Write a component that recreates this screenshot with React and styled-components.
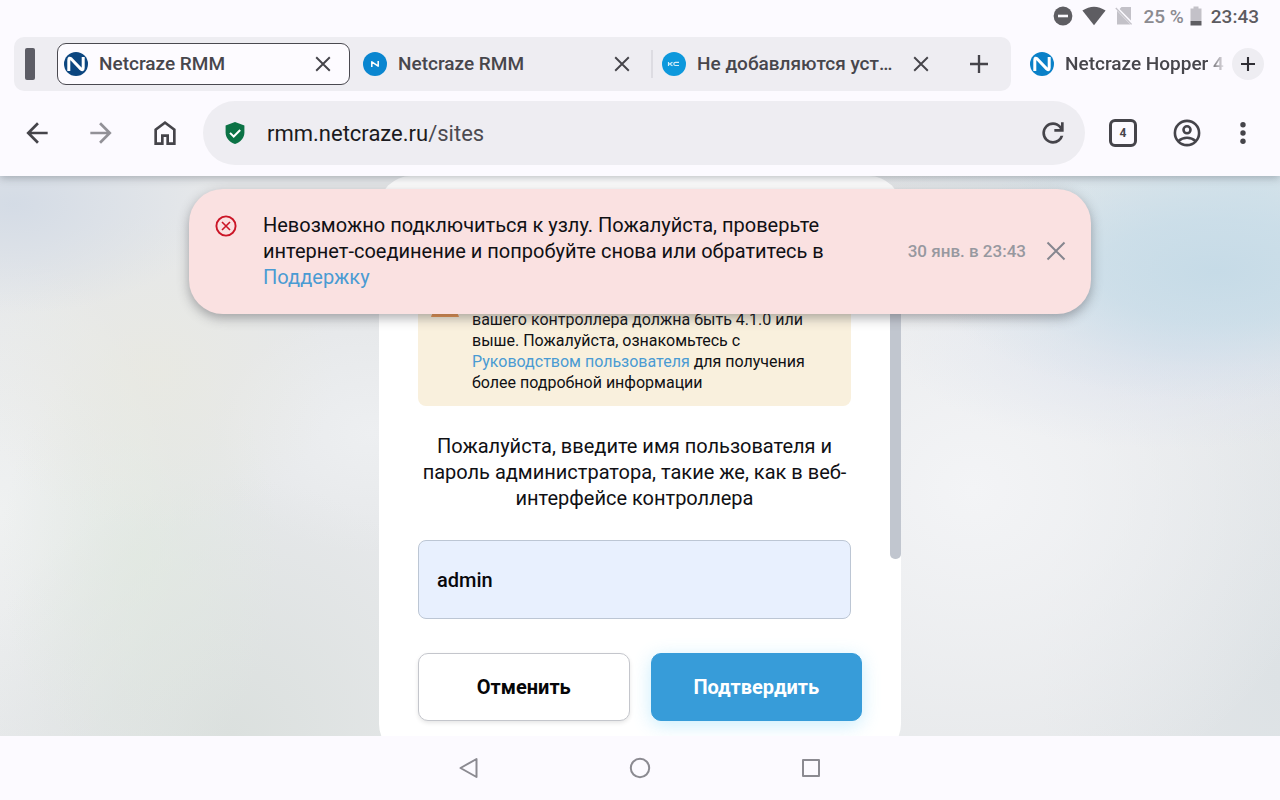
import React, { useState } from 'react';
import styled, { createGlobalStyle, css } from 'styled-components';

const GlobalStyle = createGlobalStyle`
  *, *::before, *::after { box-sizing: border-box; }
  html, body { margin: 0; padding: 0; }
  body { background: #fcfaff; font-family: Roboto, "Noto Sans", sans-serif; color: #101014; }
  button { font-family: inherit; cursor: pointer; }
  svg { display: block; flex: none; }
  a { color: #4a9bd3; text-decoration: none; }
`;

const Screen = styled.div`
  display: flex;
  flex-direction: column;
  min-height: 100vh;
`;

/* ---------- system status bar ---------- */
const StatusBar = styled.header`
  display: flex;
  justify-content: flex-end;
  align-items: center;
  height: 32px;
  padding-right: 21px;
  font-size: 19px;
  font-weight: 500;
  color: #5c5b60;
`;
const StatusIcons = styled.div`
  display: flex;
  align-items: center;
  gap: 9px;
  margin-right: 10px;
`;
const Battery = styled.div`
  display: flex;
  align-items: center;
  gap: 6px;
  margin-right: 9px;
  color: #8b8a90;
`;

/* ---------- browser tab strip ---------- */
const TabStrip = styled.div`
  display: flex;
  align-items: center;
  height: 64px;
  padding: 0 16px 0 14px;
`;
const TabGroup = styled.div`
  display: flex;
  flex: 1;
  min-width: 0;
  align-items: center;
  height: 54px;
  padding: 0 16px 0 11px;
  border-radius: 10px;
  background: #eeedf2;
`;
const GroupMarker = styled.span`
  flex: none;
  width: 10px;
  height: 32px;
  margin-right: 22px;
  border-radius: 2px;
  background: #5d5d66;
`;
const Tabs = styled.div`
  display: flex;
  flex: 1;
  min-width: 0;
  align-items: center;
`;
const TabDivider = styled.span`
  flex: none;
  width: 2px;
  height: 28px;
  margin: 0 2px;
  background: ${(p) => (p.$visible ? '#dddce2' : 'transparent')};
`;
const Tab = styled.div`
  display: flex;
  flex: 1;
  min-width: 0;
  align-items: center;
  gap: 11px;
  height: 42px;
  padding: 0 14px 0 6px;
  border: 1px solid transparent;
  border-radius: 9px;
  ${(p) =>
    p.$active &&
    css`
      border-color: #4a4950;
      background: #fdfbff;
    `}
`;
const TabTitle = styled.span`
  flex: 1;
  min-width: 0;
  overflow: hidden;
  white-space: nowrap;
  font-size: 19px;
  line-height: 24px;
  font-weight: 500;
  color: #47464c;
  ${(p) =>
    p.$fade &&
    css`
      mask-image: linear-gradient(to right, #000 calc(100% - 18px), transparent);
    `}
`;
const IconButton = styled.button`
  display: flex;
  flex: none;
  align-items: center;
  justify-content: center;
  width: ${(p) => p.$size}px;
  height: ${(p) => p.$size}px;
  padding: 0;
  border: 0;
  border-radius: 50%;
  background: ${(p) => p.$fill || 'transparent'};
  color: ${(p) => p.$tone || '#45444a'};
`;
const NewTabSlot = styled.div`
  margin-left: 15px;
`;
const LooseTab = styled.div`
  display: flex;
  flex: none;
  align-items: center;
  gap: 11px;
  width: 202px;
  margin-left: 19px;
  padding-right: 6px;
`;

/* ---------- browser toolbar ---------- */
const Toolbar = styled.div`
  position: relative;
  z-index: 2;
  display: flex;
  align-items: center;
  height: 80px;
  padding: 0 21px 6px 21px;
  background: #fcfaff;
  box-shadow: 0 2px 8px rgba(60, 70, 80, 0.35);
  clip-path: inset(0 0 -16px 0);
`;
const NavButtons = styled.nav`
  display: flex;
  gap: 32px;
  margin-right: 22px;
`;
const AddressBar = styled.div`
  display: flex;
  flex: 1;
  min-width: 0;
  align-items: center;
  height: 64px;
  padding: 0 16px 0 20px;
  border-radius: 32px;
  background: #eeedf2;
`;
const Url = styled.a`
  flex: 1;
  min-width: 0;
  margin-left: 20px;
  padding-top: 2px;
  overflow: hidden;
  white-space: nowrap;
  font-size: 22px;
  line-height: 30px;
  color: #1b1b20;
  span { color: #4b4a50; }
`;
const ToolbarActions = styled.div`
  display: flex;
  gap: 32px;
  margin-left: 22px;
`;
const MenuSlot = styled.div`
  margin-left: 24px;
`;
const TabCount = styled.span`
  display: flex;
  align-items: center;
  justify-content: center;
  width: 28px;
  height: 28px;
  border: 3px solid #45444a;
  border-radius: 6px;
  font-size: 12px;
  font-weight: 700;
`;

/* ---------- web page ---------- */
const Page = styled.main`
  position: relative;
  display: flex;
  flex: 1;
  justify-content: center;
  overflow: hidden;
  background:
    radial-gradient(ellipse 290px 130px at 95% 17%, rgba(198, 219, 231, 1), rgba(199, 220, 232, 0.75) 40%, rgba(205, 222, 232, 0.25) 75%, rgba(210, 222, 234, 0) 100%),
    radial-gradient(ellipse 380px 150px at 98% 3%, rgba(210, 226, 234, 0.9), rgba(210, 226, 234, 0) 100%),
    radial-gradient(ellipse 280px 100px at 92% 31%, rgba(220, 226, 238, 0.8), rgba(220, 226, 238, 0) 100%),
    radial-gradient(ellipse 360px 330px at 76% 56%, rgba(243, 244, 246, 1), rgba(243, 244, 246, 0) 100%),
    radial-gradient(ellipse 240px 420px at 100% 90%, rgba(221, 226, 229, 1), rgba(221, 226, 229, 0) 100%),
    radial-gradient(ellipse 200px 110px at 1% 5%, rgba(210, 218, 229, 0.9), rgba(210, 218, 229, 0) 100%),
    radial-gradient(ellipse 180px 160px at 12% 35%, rgba(233, 233, 225, 0.8), rgba(233, 233, 225, 0) 100%),
    radial-gradient(ellipse 140px 220px at 11% 68%, rgba(225, 233, 224, 0.7), rgba(225, 233, 224, 0) 100%),
    radial-gradient(ellipse 260px 260px at 18% 100%, rgba(219, 224, 222, 1), rgba(219, 224, 222, 0) 100%),
    radial-gradient(ellipse 180px 260px at 0% 60%, rgba(239, 241, 241, 1), rgba(239, 241, 241, 0) 100%),
    radial-gradient(ellipse 160px 120px at 29% 46%, rgba(237, 239, 241, 1), rgba(237, 239, 241, 0) 100%),
    #e6e8ea;
`;
const Dialog = styled.section`
  display: flex;
  flex-direction: column;
  width: 522px;
  max-width: 100%;
  margin-bottom: -20px;
  border-radius: 32px;
  background: #fff;
  overflow: hidden;
`;
const DialogScroll = styled.div`
  display: flex;
`;
const DialogBody = styled.div`
  flex: 1;
  min-width: 0;
  padding: 111px 39px 0;
`;
const ScrollThumb = styled.div`
  width: 11px;
  height: 343px;
  margin-top: 40px;
  border-radius: 5px;
  background: #c1c6cf;
`;
const Warning = styled.div`
  display: flex;
  align-items: flex-start;
  gap: 13px;
  padding: 2px 20px 13px 13px;
  border-radius: 8px;
  background: #f9f0dd;
`;
const WarningText = styled.p`
  flex: 1;
  margin: 0;
  padding-top: 20px;
  font-size: 16px;
  line-height: 21px;
`;
const Message = styled.p`
  margin: 27px 0 29px;
  font-size: 20px;
  line-height: 26px;
  text-align: center;
`;
const LoginInput = styled.input`
  display: block;
  width: 100%;
  height: 79px;
  padding: 0 18px;
  border: 1px solid #bcc6d4;
  border-radius: 8px;
  background: #e8f0fe;
  color: #08080c;
  font-family: inherit;
  font-size: 20px;
  font-weight: 500;
  outline: none;
`;
const DialogFooter = styled.div`
  display: flex;
  gap: 21px;
  padding: 34px 39px 35px;
`;
const ActionButton = styled.button`
  flex: 1;
  height: 68px;
  border: 1px solid ${(p) => (p.$primary ? '#379cd9' : '#c4c6cc')};
  border-radius: 10px;
  background: ${(p) => (p.$primary ? '#379cd9' : '#fff')};
  box-shadow: ${(p) =>
    p.$primary ? '0 4px 18px rgba(90, 200, 245, 0.32)' : '0 2px 4px rgba(0, 0, 0, 0.1)'};
  color: ${(p) => (p.$primary ? '#fff' : '#060608')};
  font-size: 20px;
  font-weight: 700;
`;

const ToastLayer = styled.div`
  position: absolute;
  top: 13px;
  left: 0;
  right: 0;
  display: flex;
  justify-content: center;
  padding: 0 16px;
`;
const Toast = styled.div`
  display: flex;
  align-items: center;
  width: 902px;
  padding: 23px 20px 24px 26px;
  border-radius: 34px;
  background: #fae1e1;
  box-shadow: 0 4px 12px rgba(60, 60, 66, 0.42);
`;
const ToastIcon = styled.span`
  align-self: flex-start;
  padding-top: 3px;
  margin-right: 26px;
`;
const ToastText = styled.p`
  flex: 1;
  margin: 0;
  padding-right: 64px;
  font-size: 20px;
  line-height: 26px;
`;
const ToastTime = styled.time`
  margin-right: 15px;
  white-space: nowrap;
  font-size: 17px;
  font-weight: 500;
  color: #97989f;
`;

/* ---------- system navigation ---------- */
const SystemNav = styled.footer`
  display: flex;
  justify-content: center;
  align-items: center;
  gap: 139px;
  height: 64px;
`;

const BrandIcon = ({ color }) => (
  <svg width="24" height="24" viewBox="0 0 24 24" aria-hidden="true">
    <circle cx="12" cy="12" r="12" fill={color} />
    <path
      d="M4.800 19V8.200Q4.800 4.800 7.300 7L16.700 16.800Q19.200 19 19.200 15.800V5"
      fill="none"
      stroke="#fff"
      strokeWidth="3"
    />
  </svg>
);
const BrandSmallIcon = () => (
  <svg width="24" height="24" viewBox="0 0 24 24" aria-hidden="true">
    <circle cx="12" cy="12" r="12" fill="#0a86d0" />
    <path d="M8.800 15V9.800L15.200 14.200V9" fill="none" stroke="#fff" strokeWidth="1.500" strokeLinejoin="round" />
  </svg>
);
const ForumIcon = () => (
  <svg width="24" height="24" viewBox="0 0 24 24" aria-hidden="true">
    <circle cx="12" cy="12" r="12" fill="#0d98dc" />
    <path
      d="M6.500 10v4M10.500 10.200L7.500 12l3 1.800M17 10.400h-3.500q-1.700 0-1.700 1.500t1.700 1.600H17"
      fill="none"
      stroke="#d3edf9"
      strokeWidth="1.200"
    />
  </svg>
);
const CrossIcon = ({ size, width }) => (
  <svg width={size} height={size} viewBox="0 0 20 20" fill="none" stroke="currentColor" strokeWidth={width} aria-hidden="true">
    <path d="M1.500 1.500l17 17M18.500 1.500l-17 17" />
  </svg>
);
const PlusIcon = ({ size, width }) => (
  <svg width={size} height={size} viewBox="0 0 20 20" fill="none" stroke="currentColor" strokeWidth={width} aria-hidden="true">
    <path d="M10 0v20M0 10h20" />
  </svg>
);
const BackIcon = () => (
  <svg width="32" height="32" viewBox="0 0 24 24" fill="currentColor" aria-hidden="true">
    <path d="m7.825 13 5.600 5.600L12 20l-8-8 8-8 1.425 1.400-5.600 5.600H20v2z" />
  </svg>
);
const ForwardIcon = () => (
  <svg width="32" height="32" viewBox="0 0 24 24" fill="currentColor" aria-hidden="true">
    <path d="M16.175 13H4v-2h12.175l-5.600-5.600L12 4l8 8-8 8-1.425-1.400z" />
  </svg>
);
const HomeIcon = () => (
  <svg width="32" height="32" viewBox="0 0 24 24" fill="currentColor" aria-hidden="true">
    <path d="M6 19h3v-6h6v6h3v-9l-6-4.500L6 10zm-2 2V9l8-6 8 6v12h-7v-6h-2v6z" />
  </svg>
);
const ShieldIcon = () => (
  <svg width="24" height="24" viewBox="0 0 24 24" aria-hidden="true">
    <path d="M12 .9l9.400 3.500v7.100c0 5.200-3.800 9.900-9.400 11.500-5.600-1.600-9.400-6.300-9.400-11.500V4.400z" fill="#0b7245" />
    <path d="M7 11.900l3.700 3.600 6.500-6.500" fill="none" stroke="#fff" strokeWidth="2" />
  </svg>
);
const ReloadIcon = () => (
  <svg width="32" height="32" viewBox="0 -960 960 960" fill="currentColor" aria-hidden="true">
    <path d="M480-160q-134 0-227-93t-93-227q0-134 93-227t227-93q69 0 132 28.500T720-690v-110h80v280H520v-80h168q-32-56-87.500-88T480-720q-100 0-170 70t-70 170q0 100 70 170t170 70q77 0 139-44t87-116h84q-28 106-114 173t-196 67Z" />
  </svg>
);
const AccountIcon = () => (
  <svg width="32" height="32" viewBox="0 0 32 32" fill="none" stroke="currentColor" strokeWidth="2.600" aria-hidden="true">
    <circle cx="16" cy="16" r="12.100" />
    <circle cx="16" cy="12.800" r="3.500" />
    <path d="M7.500 24q3.500-3.200 8.500-3.200t8.500 3.200" />
  </svg>
);
const MoreIcon = () => (
  <svg width="32" height="32" viewBox="0 0 32 32" fill="currentColor" aria-hidden="true">
    <circle cx="16" cy="7.800" r="2.700" />
    <circle cx="16" cy="16" r="2.700" />
    <circle cx="16" cy="24.200" r="2.700" />
  </svg>
);
const DoNotDisturbIcon = () => (
  <svg width="20" height="20" viewBox="0 0 20 20" aria-hidden="true">
    <circle cx="10" cy="10" r="9.400" fill="#5e5d62" />
    <path d="M5 10h10" stroke="#fcfaff" strokeWidth="2.600" />
  </svg>
);
const WifiIcon = () => (
  <svg width="24" height="20" viewBox="0 0 24 20" aria-hidden="true">
    <path d="M.4 4.600Q12-3.200 23.600 4.600L12 19.200z" fill="#5e5d62" />
  </svg>
);
const NoSimIcon = () => (
  <svg width="18" height="20" viewBox="0 0 18 20" aria-hidden="true">
    <path d="M6.500 1H16v13.600L4.600 3zM2 4.800L15.500 18.500H2z" fill="#c3c1c8" />
    <path d="M.8 2l15.800 16.400" stroke="#c3c1c8" strokeWidth="1.300" />
  </svg>
);
const BatteryIcon = () => (
  <svg width="12" height="20" viewBox="0 0 12 20" aria-hidden="true">
    <path d="M3.500 .5h5v2H11.500V15H.5V2.500h3z" fill="#c3c1c8" />
    <path d="M.5 15h11v4.500H.5z" fill="#5e5d62" />
  </svg>
);
const ErrorIcon = () => (
  <svg width="22" height="22" viewBox="0 0 22 22" fill="none" stroke="#cb1526" aria-hidden="true">
    <circle cx="11" cy="11" r="9.600" strokeWidth="1.900" />
    <path d="M7 7l8 8M15 7l-8 8" strokeWidth="1.600" />
  </svg>
);
const WarningIcon = () => (
  <svg width="28" height="28" viewBox="0 0 28 28" aria-hidden="true">
    <path d="M14 2L27.500 27.500H.5z" fill="#e9924d" stroke="#e9924d" strokeLinejoin="round" />
    <path d="M14 10v9M14 21.500v2.500" stroke="#fff" strokeWidth="2.400" />
  </svg>
);
const NavShape = ({ children }) => (
  <svg width="32" height="32" viewBox="0 0 32 32" fill="none" stroke="#8b8a91" strokeWidth="2" strokeLinejoin="round" aria-hidden="true">
    {children}
  </svg>
);

const groupedTabs = [
  { title: 'Netcraze RMM', icon: <BrandIcon color="#0c4680" />, active: true },
  { title: 'Netcraze RMM', icon: <BrandSmallIcon /> },
  { title: 'Не добавляются уст…', icon: <ForumIcon />, divided: true },
];

export default function App() {
  const [login, setLogin] = useState('admin');

  return (
    <>
      <GlobalStyle />
      <Screen>
        <StatusBar>
          <StatusIcons>
            <DoNotDisturbIcon />
            <WifiIcon />
            <NoSimIcon />
          </StatusIcons>
          <Battery>
            25 %
            <BatteryIcon />
          </Battery>
          <time>23:43</time>
        </StatusBar>

        <TabStrip>
          <TabGroup>
            <GroupMarker />
            <Tabs>
              {groupedTabs.map((tab, i) => (
                <React.Fragment key={i}>
                  {i > 0 && <TabDivider $visible={tab.divided} />}
                  <Tab $active={tab.active}>
                    {tab.icon}
                    <TabTitle>{tab.title}</TabTitle>
                    <IconButton $size={24} aria-label="Закрыть вкладку">
                      <CrossIcon size={16} width={2.4} />
                    </IconButton>
                  </Tab>
                </React.Fragment>
              ))}
            </Tabs>
            <NewTabSlot>
              <IconButton $size={32} aria-label="Новая вкладка в группе">
                <PlusIcon size={18} width={2.6} />
              </IconButton>
            </NewTabSlot>
          </TabGroup>
          <LooseTab>
            <BrandIcon color="#0a80c8" />
            <TabTitle $fade>Netcraze Hopper 4</TabTitle>
          </LooseTab>
          <IconButton $size={32} $fill="#eeedf2" $tone="#2f2e34" aria-label="Новая вкладка">
            <PlusIcon size={14} width={3} />
          </IconButton>
        </TabStrip>

        <Toolbar>
          <NavButtons>
            <IconButton $size={32} aria-label="Назад"><BackIcon /></IconButton>
            <IconButton $size={32} $tone="#929197" aria-label="Вперёд"><ForwardIcon /></IconButton>
            <IconButton $size={32} aria-label="Домой"><HomeIcon /></IconButton>
          </NavButtons>
          <AddressBar>
            <ShieldIcon />
            <Url href="#sites">rmm.netcraze.ru<span>/sites</span></Url>
            <IconButton $size={32} aria-label="Обновить"><ReloadIcon /></IconButton>
          </AddressBar>
          <ToolbarActions>
            <IconButton $size={32} aria-label="Вкладки"><TabCount>4</TabCount></IconButton>
            <IconButton $size={32} aria-label="Профиль"><AccountIcon /></IconButton>
          </ToolbarActions>
          <MenuSlot>
            <IconButton $size={32} aria-label="Меню"><MoreIcon /></IconButton>
          </MenuSlot>
        </Toolbar>

        <Page>
          <Dialog>
            <DialogScroll>
              <DialogBody>
                <Warning>
                  <WarningIcon />
                  <WarningText>
                    вашего контроллера должна быть 4.1.0 или выше. Пожалуйста, ознакомьтесь с{' '}
                    <a href="#guide">Руководством пользователя</a> для получения более подробной информации
                  </WarningText>
                </Warning>
                <Message>
                  Пожалуйста, введите имя пользователя и пароль администратора, такие же, как в веб-интерфейсе
                  контроллера
                </Message>
                <LoginInput
                  aria-label="Имя пользователя"
                  value={login}
                  onChange={(e) => setLogin(e.target.value)}
                />
              </DialogBody>
              <ScrollThumb />
            </DialogScroll>
            <DialogFooter>
              <ActionButton>Отменить</ActionButton>
              <ActionButton $primary>Подтвердить</ActionButton>
            </DialogFooter>
          </Dialog>

          <ToastLayer>
            <Toast role="alert">
              <ToastIcon><ErrorIcon /></ToastIcon>
              <ToastText>
                Невозможно подключиться к узлу. Пожалуйста, проверьте интернет-соединение и попробуйте снова или
                обратитесь в <a href="#support">Поддержку</a>
              </ToastText>
              <ToastTime>30 янв. в 23:43</ToastTime>
              <IconButton $size={30} $tone="#85868f" aria-label="Закрыть">
                <CrossIcon size={20} width={2} />
              </IconButton>
            </Toast>
          </ToastLayer>
        </Page>

        <SystemNav>
          <IconButton $size={32} aria-label="Назад">
            <NavShape><path d="M23.500 7v18L7.500 16z" /></NavShape>
          </IconButton>
          <IconButton $size={32} aria-label="Главный экран">
            <NavShape><circle cx="16" cy="16" r="9.200" /></NavShape>
          </IconButton>
          <IconButton $size={32} aria-label="Недавние приложения">
            <NavShape><path d="M8 8h16v16H8z" /></NavShape>
          </IconButton>
        </SystemNav>
      </Screen>
    </>
  );
}
